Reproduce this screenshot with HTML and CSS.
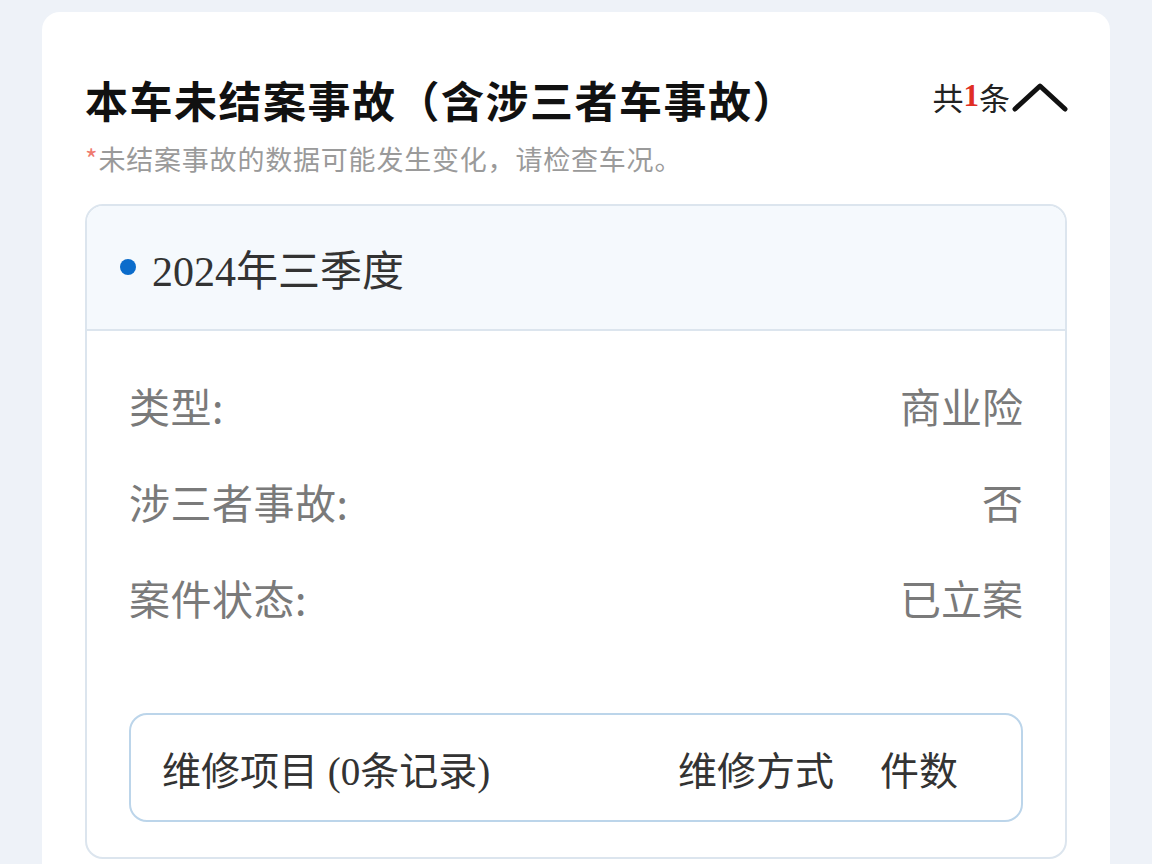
FILE: index.html
```html
<!DOCTYPE html>
<html lang="zh-CN">
<head>
	<meta charset="utf-8">
	<meta name="viewport" content="width=device-width, initial-scale=1.0">
	<title>未结案事故</title>
	<link rel="stylesheet" href="styles.css">
</head>
<body>

<div class="card">

	<div class="cardhead">
		<h1 class="title">本车未结案事故（含涉三者车事故）</h1>
		<div class="count">
			共<span class="num">1</span>条
			<svg class="chevron" width="56" height="32" viewBox="0 0 56 32">
				<polyline points="3,28 28,5 53,28" fill="none" stroke="#111" stroke-width="5" stroke-linecap="round" stroke-linejoin="round"/>
			</svg>
		</div>
	</div>
	<p class="tip"><span class="star">*</span>未结案事故的数据可能发生变化，请检查车况。</p>

	<div class="accident">
		<div class="quarter">
			<span class="dot"></span>2024年三季度
		</div>

		<div class="rows">
			<div class="row"><span class="label">类型:</span><span class="value">商业险</span></div>
			<div class="row"><span class="label">涉三者事故:</span><span class="value">否</span></div>
			<div class="row"><span class="label">案件状态:</span><span class="value">已立案</span></div>

			<div class="repair">
				<span class="repairname">维修项目 (0条记录)</span>
				<span>维修方式</span>
				<span class="repaircount">件数</span>
			</div>
		</div>
	</div>

</div>

</body>
</html>
```

FILE: styles.css
```css
body {
	margin: 0;
	background-color: #eef2f8;
	font-family: "Liberation Serif", "Noto Sans CJK SC", serif;
	color: #333;
}

.card {
	background-color: #fff;
	margin: 12px 42px 0 42px;
	padding: 59px 43px 40px 43px;
	border-radius: 18px;
	min-height: 900px;
}

.cardhead {
	display: flex;
	justify-content: space-between;
	align-items: center;
	height: 56px;
}

.title {
	margin: 0;
	font-family: "Noto Sans CJK SC", sans-serif;
	font-size: 43px;
	font-weight: bold;
	color: #111;
	line-height: 56px;
	letter-spacing: 1.5px;
}

.count {
	display: flex;
	align-items: center;
	font-size: 31px;
	color: #222;
	margin-top: -6px;
	margin-right: -1px;
}
.count .num {
	color: #e02e24;
	font-weight: bold;
}
.chevron {
	margin-left: 2px;
	margin-top: 2px;
}

.tip {
	margin: 14px 0 27px 0;
	font-family: "Noto Sans CJK SC", sans-serif;
	font-size: 27px;
	line-height: 36px;
	color: #9a9a9a;
	letter-spacing: 0.8px;
}
.tip .star {
	color: #ef7b70;
}

.accident {
	border: 2px solid #dce5ee;
	border-radius: 18px;
	overflow: hidden;
}

.quarter {
	display: flex;
	align-items: center;
	height: 123px;
	padding-left: 33px;
	background-color: #f5f9fd;
	border-bottom: 2px solid #dce5ee;
	font-size: 42px;
	color: #333;
}
.dot {
	width: 16px;
	height: 16px;
	border-radius: 50%;
	background-color: #0b6ccb;
	margin-right: 16px;
	margin-top: -2px;
}

.rows {
	padding: 26px 42px 35px 42px;
}

.row {
	display: flex;
	justify-content: space-between;
	align-items: center;
	height: 96px;
	font-family: "Noto Sans CJK SC", sans-serif;
	font-size: 41px;
	color: #7a7a7a;
}
.label {
	letter-spacing: 0.5px;
}

.repair {
	display: flex;
	align-items: center;
	height: 105px;
	margin-top: 68px;
	padding: 0 63px 0 31px;
	border: 2px solid #bcd5ea;
	border-radius: 18px;
	font-size: 39px;
	color: #333;
}
.repairname {
	flex: 1;
}
.repaircount {
	margin-left: 46px;
}
```
